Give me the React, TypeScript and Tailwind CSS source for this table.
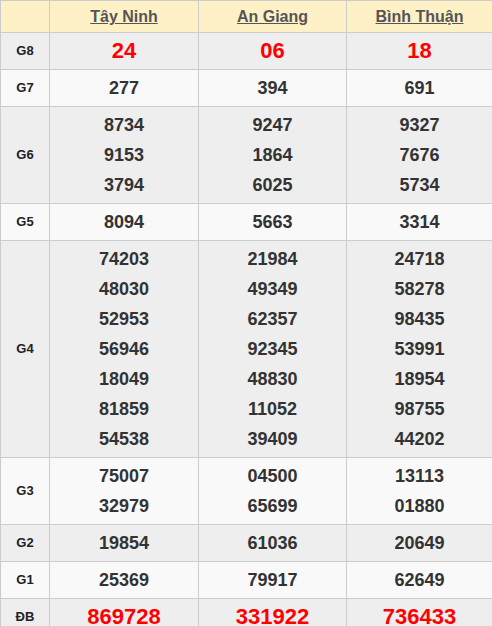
import React from "react";

type Row = { label: string; values: string[][]; big?: boolean };

const rows: Row[] = [
  { label: "G8", values: [["24"], ["06"], ["18"]], big: true },
  { label: "G7", values: [["277"], ["394"], ["691"]] },
  {
    label: "G6",
    values: [
      ["8734", "9153", "3794"],
      ["9247", "1864", "6025"],
      ["9327", "7676", "5734"],
    ],
  },
  { label: "G5", values: [["8094"], ["5663"], ["3314"]] },
  {
    label: "G4",
    values: [
      ["74203", "48030", "52953", "56946", "18049", "81859", "54538"],
      ["21984", "49349", "62357", "92345", "48830", "11052", "39409"],
      ["24718", "58278", "98435", "53991", "18954", "98755", "44202"],
    ],
  },
  {
    label: "G3",
    values: [
      ["75007", "32979"],
      ["04500", "65699"],
      ["13113", "01880"],
    ],
  },
  { label: "G2", values: [["19854"], ["61036"], ["20649"]] },
  { label: "G1", values: [["25369"], ["79917"], ["62649"]] },
  { label: "ĐB", values: [["869728"], ["331922"], ["736433"]], big: true },
];

const provinces = ["Tây Ninh", "An Giang", "Bình Thuận"];

export default function App() {
  return (
    <div
      className="w-[492px] bg-white"
      style={{ fontFamily: '"Liberation Sans", Arial, sans-serif' }}
    >
      <table className="w-[492px] border-collapse table-fixed">
        <colgroup>
          <col className="w-[49px]" />
          <col className="w-[149px]" />
          <col className="w-[148px]" />
          <col className="w-[146px]" />
        </colgroup>
        <thead>
          <tr className="bg-[#fff1c6]">
            <th className="border border-[#cccccc] py-[3px]"></th>
            {provinces.map((p) => (
              <th
                key={p}
                className="border border-[#cccccc] py-[3px] text-center text-[16px] leading-[25px] font-bold text-[#555555]"
              >
                <span className="underline">{p}</span>
              </th>
            ))}
          </tr>
        </thead>
        <tbody>
          {rows.map((r, i) => (
            <tr
              key={r.label}
              className={i % 2 === 0 ? "bg-[#eeeeee]" : "bg-[#f9f9f9]"}
            >
              <td className="border border-[#cccccc] text-center align-middle text-[13px] font-bold text-[#222222]">
                {r.label}
              </td>
              {r.values.map((col, j) => (
                <td
                  key={j}
                  className="border border-[#cccccc] py-[3px] text-center align-middle"
                >
                  {col.map((v, k) => (
                    <div
                      key={k}
                      className={
                        r.big
                          ? "text-[22px] leading-[30px] font-bold text-[#ff0000]"
                          : "text-[18px] leading-[30px] font-bold text-[#333333]"
                      }
                    >
                      {v}
                    </div>
                  ))}
                </td>
              ))}
            </tr>
          ))}
        </tbody>
      </table>
    </div>
  );
}
